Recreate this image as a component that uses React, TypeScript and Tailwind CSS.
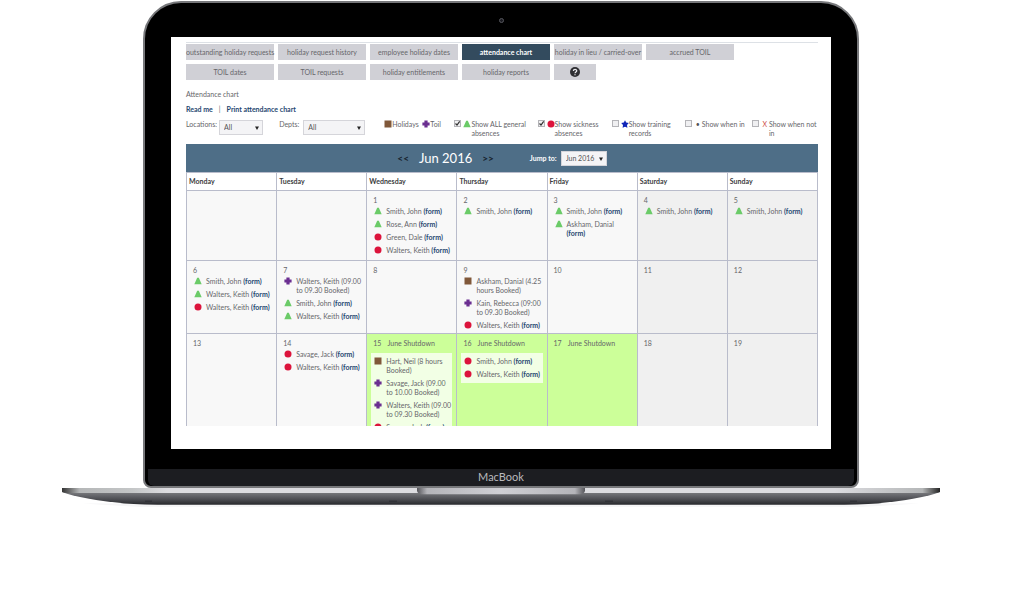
import { useState } from 'react';
import clsx from 'clsx';

type Kind = 'absence' | 'sick' | 'holiday' | 'toil' | 'training';

type Entry = {
  kind: Kind;
  name: string;
  booked?: string;
};

type Day = {
  date?: number;
  note?: string;
  weekend?: boolean;
  entries?: Entry[];
};

const tabs = [
  'outstanding holiday requests',
  'holiday request history',
  'employee holiday dates',
  'attendance chart',
  'holiday in lieu / carried-over',
  'accrued TOIL',
  'TOIL dates',
  'TOIL requests',
  'holiday entitlements',
  'holiday reports',
];

const weekdays = ['Monday', 'Tuesday', 'Wednesday', 'Thursday', 'Friday', 'Saturday', 'Sunday'];

const weeks: { height: string; days: Day[] }[] = [
  {
    height: 'h-[70px]',
    days: [
      {},
      {},
      {
        date: 1,
        entries: [
          { kind: 'absence', name: 'Smith, John' },
          { kind: 'absence', name: 'Rose, Ann' },
          { kind: 'sick', name: 'Green, Dale' },
          { kind: 'sick', name: 'Walters, Keith' },
        ],
      },
      { date: 2, entries: [{ kind: 'absence', name: 'Smith, John' }] },
      {
        date: 3,
        entries: [
          { kind: 'absence', name: 'Smith, John' },
          { kind: 'absence', name: 'Askham, Danial' },
        ],
      },
      { date: 4, weekend: true, entries: [{ kind: 'absence', name: 'Smith, John' }] },
      { date: 5, weekend: true, entries: [{ kind: 'absence', name: 'Smith, John' }] },
    ],
  },
  {
    height: 'h-[73px]',
    days: [
      {
        date: 6,
        entries: [
          { kind: 'absence', name: 'Smith, John' },
          { kind: 'absence', name: 'Walters, Keith' },
          { kind: 'sick', name: 'Walters, Keith' },
        ],
      },
      {
        date: 7,
        entries: [
          { kind: 'toil', name: 'Walters, Keith', booked: '(09.00 to 09.30 Booked)' },
          { kind: 'absence', name: 'Smith, John' },
          { kind: 'absence', name: 'Walters, Keith' },
        ],
      },
      { date: 8 },
      {
        date: 9,
        entries: [
          { kind: 'holiday', name: 'Askham, Danial', booked: '(4.25 hours Booked)' },
          { kind: 'toil', name: 'Kain, Rebecca', booked: '(09:00 to 09.30 Booked)' },
          { kind: 'sick', name: 'Walters, Keith' },
        ],
      },
      { date: 10 },
      { date: 11, weekend: true },
      { date: 12, weekend: true },
    ],
  },
  {
    height: 'h-[110px]',
    days: [
      { date: 13 },
      {
        date: 14,
        entries: [
          { kind: 'sick', name: 'Savage, Jack' },
          { kind: 'sick', name: 'Walters, Keith' },
        ],
      },
      {
        date: 15,
        note: 'June Shutdown',
        entries: [
          { kind: 'holiday', name: 'Hart, Neil', booked: '(8 hours Booked)' },
          { kind: 'toil', name: 'Savage, Jack', booked: '(09.00 to 10.00 Booked)' },
          { kind: 'toil', name: 'Walters, Keith', booked: '(09.00 to 09.30 Booked)' },
          { kind: 'sick', name: 'Savage, Jack' },
        ],
      },
      {
        date: 16,
        note: 'June Shutdown',
        entries: [
          { kind: 'sick', name: 'Smith, John' },
          { kind: 'sick', name: 'Walters, Keith' },
        ],
      },
      { date: 17, note: 'June Shutdown' },
      { date: 18, weekend: true },
      { date: 19, weekend: true },
    ],
  },
];

const legend: { kind?: Kind; mark?: string; label: string; checkbox?: boolean; checked?: boolean }[] = [
  { kind: 'holiday', label: 'Holidays' },
  { kind: 'toil', label: 'Toil' },
  { kind: 'absence', label: 'Show ALL general absences', checkbox: true, checked: true },
  { kind: 'sick', label: 'Show sickness absences', checkbox: true, checked: true },
  { kind: 'training', label: 'Show training records', checkbox: true },
  { mark: '•', label: 'Show when in', checkbox: true },
  { mark: 'X', label: 'Show when not in', checkbox: true },
];

function Marker({ kind }: { kind: Kind }) {
  return (
    <svg viewBox="0 0 8 8" className="h-2 w-2 shrink-0" aria-hidden="true">
      {kind === 'absence' && <path d="M3.200.8h1.600L7.700 7.200H.3Z" fill="#6bcb68" />}
      {kind === 'sick' && <circle cx="4" cy="4" r="3.5" fill="#dc143c" />}
      {kind === 'holiday' && <rect x=".5" y=".5" width="7" height="7" fill="#80583a" />}
      {kind === 'toil' && <path d="M2.400.4h3.200v2h2v3.200h-2v2H2.400v-2h-2V2.400h2Z" fill="#6b2f91" />}
      {kind === 'training' && (
        <path d="m4 .3 1.200 2.200 2.600.5L6 5l.4 2.700L4 6.800 1.600 7.700 2 5 .2 3l2.600-.5Z" fill="#1226b8" />
      )}
    </svg>
  );
}

function Select({ id, options, className }: { id: string; options: string[]; className: string }) {
  return (
    <div className={clsx('relative', className)}>
      <select
        id={id}
        className="block h-[15px] w-full appearance-none border border-[#d5d5da] bg-[#f4f4f6] px-1 text-[#555]"
      >
        {options.map((option) => (
          <option key={option}>{option}</option>
        ))}
      </select>
      <svg viewBox="0 0 4 4" className="pointer-events-none absolute top-1.5 right-1 h-1 w-1" aria-hidden="true">
        <path d="M0 .5h4L2 4Z" fill="#222" />
      </svg>
    </div>
  );
}

function Legend() {
  return (
    <ul className="grid grid-cols-[38fr_32fr_83fr_74fr_73fr_67fr_66fr]">
      {legend.map(({ kind, mark, label, checkbox, checked }) => (
        <li key={label}>
          <label className="flex items-start">
            {checkbox && (
              <span className="relative mr-0.5 h-[7px] w-[7px] shrink-0">
                <input
                  type="checkbox"
                  defaultChecked={checked}
                  className="peer block h-[7px] w-[7px] appearance-none border border-[#b4b4b8] bg-[#f0f0f2]"
                />
                <svg
                  viewBox="0 0 7 7"
                  className="pointer-events-none absolute inset-0 hidden h-[7px] w-[7px] peer-checked:block"
                  aria-hidden="true"
                >
                  <path d="M1.5 3.5 3 5l2.700-3.600" fill="none" stroke="#333" strokeWidth="1.2" />
                </svg>
              </span>
            )}
            {kind && <Marker kind={kind} />}
            {mark && (
              <span className={clsx('w-2 shrink-0 text-center', mark === 'X' ? 'text-[#d0524a]' : 'text-[#555]')}>
                {mark}
              </span>
            )}
            <span>{label}</span>
          </label>
        </li>
      ))}
    </ul>
  );
}

function DayCell({ day }: { day: Day }) {
  return (
    <td
      className={clsx(
        'border border-[#b9bccb] p-0 pt-[5px] align-top',
        day.note ? 'bg-[#ccff99]' : day.weekend ? 'bg-[#f0f0f0]' : 'bg-[#f8f8f8]',
      )}
    >
      {day.date && (
        <p className="px-1.5">
          {day.date}
          {day.note && <span className="ml-1.5">{day.note}</span>}
        </p>
      )}
      {day.entries && (
        <ul
          className={clsx(
            'mr-1 flex flex-col gap-1',
            day.note ? 'mt-[5px] ml-1 bg-[#f2ffe5] py-1 pl-[3px]' : 'pt-0.5 pl-[7px]',
          )}
        >
          {day.entries.map((entry, i) => (
            <li key={i} className="flex">
              <Marker kind={entry.kind} />
              <span className="ml-1">
                {entry.booked ? (
                  `${entry.name} ${entry.booked}`
                ) : (
                  <>
                    {entry.name}{' '}
                    <a href="#form" className="font-bold text-[#1f4770]">
                      (form)
                    </a>
                  </>
                )}
              </span>
            </li>
          ))}
        </ul>
      )}
    </td>
  );
}

function AttendancePage() {
  const [active, setActive] = useState('attendance chart');

  return (
    <div className="h-[389px] overflow-hidden pt-[5px] pr-[13px] pl-[15px] font-['Lato',sans-serif] text-[7px] leading-[9px] text-[#66666a]">
      <nav className="flex flex-wrap gap-1 border-t border-[#dde1e6] pt-px">
        {tabs.map((tab) => (
          <button
            key={tab}
            type="button"
            onClick={() => setActive(tab)}
            className={clsx(
              'h-4 w-[88px] whitespace-nowrap',
              tab === active ? 'bg-[#334b5e] font-bold text-white' : 'bg-[#d0d0d6]',
            )}
          >
            {tab}
          </button>
        ))}
        <button type="button" aria-label="help" className="flex h-4 w-[42px] items-center justify-center bg-[#d0d0d6]">
          <svg viewBox="0 0 10 10" className="h-2.5 w-2.5" aria-hidden="true">
            <circle cx="5" cy="5" r="5" fill="#2f2f33" />
            <path
              d="M3.400 3.900c0-2 3.300-2 3.300-.1C6.700 5 5 5 5 6.300M5 7.200v1.100"
              fill="none"
              stroke="#e8e8ec"
              strokeWidth="1.3"
            />
          </svg>
        </button>
      </nav>

      <h1 className="mt-2.5">Attendance chart</h1>
      <p className="mt-1.5 flex gap-1.5">
        <a href="#read-me" className="font-bold text-[#1f4770]">
          Read me
        </a>
        <span>|</span>
        <a href="#print" className="font-bold text-[#1f4770]">
          Print attendance chart
        </a>
      </p>

      <div className="mt-1.5 grid grid-cols-[93fr_105fr_433fr]">
        <div className="flex gap-0.5">
          <label htmlFor="locations">Locations:</label>
          <Select id="locations" options={['All']} className="w-11" />
        </div>
        <div className="flex gap-1">
          <label htmlFor="depts">Depts:</label>
          <Select id="depts" options={['All']} className="w-[62px]" />
        </div>
        <Legend />
      </div>

      <div className="mt-1.5 flex h-7 items-center justify-center bg-[#4e6e87] text-white">
        <button type="button" aria-label="previous month" className="text-[10px] font-bold text-[#16222c]">
          &lt;&lt;
        </button>
        <h2 className="mx-2.5 text-[13px]">Jun 2016</h2>
        <button type="button" aria-label="next month" className="text-[10px] font-bold text-[#16222c]">
          &gt;&gt;
        </button>
        <label htmlFor="jump" className="mr-1 ml-9 font-bold">
          Jump to:
        </label>
        <Select id="jump" options={['Jun 2016']} className="w-[46px]" />
      </div>

      <table className="w-full table-fixed border-collapse">
        <thead>
          <tr className="h-[18px]">
            {weekdays.map((weekday) => (
              <th key={weekday} className="border border-[#b9bccb] px-0.5 text-left font-bold text-[#3c3c40]">
                {weekday}
              </th>
            ))}
          </tr>
        </thead>
        <tbody>
          {weeks.map((week, i) => (
            <tr key={i} className={week.height}>
              {week.days.map((day, j) => (
                <DayCell key={j} day={day} />
              ))}
            </tr>
          ))}
        </tbody>
      </table>
    </div>
  );
}

function LaptopBase() {
  return (
    <svg viewBox="0 0 878 22" preserveAspectRatio="none" className="block h-5 w-full" aria-hidden="true">
      <defs>
        <linearGradient id="edge">
          <stop offset="0" stopColor="#333" />
          <stop offset=".02" stopColor="#b5b7b8" />
          <stop offset=".08" stopColor="#c4c6c7" />
          <stop offset=".12" stopColor="#dcdce0" />
          <stop offset=".88" stopColor="#dcdce0" />
          <stop offset=".98" stopColor="#b5b7b8" />
          <stop offset="1" stopColor="#222" />
        </linearGradient>
        <linearGradient id="body" x2="0" y2="1">
          <stop offset="0" stopColor="#7b7c80" />
          <stop offset=".6" stopColor="#4a4b50" />
          <stop offset="1" stopColor="#26272b" />
        </linearGradient>
        <linearGradient id="notch">
          <stop offset="0" stopColor="#55555a" />
          <stop offset=".06" stopColor="#b4b4b9" />
          <stop offset=".5" stopColor="#cfcfd4" />
          <stop offset=".94" stopColor="#b4b4b9" />
          <stop offset="1" stopColor="#55555a" />
        </linearGradient>
      </defs>
      <path d="M20 17h838L800 21H78Z" fill="#f6f6f7" />
      <path d="M0 4.500C12 10 36 14 62 17Q80 18.500 110 18.500H768Q798 18.500 816 17C842 14 866 10 878 4.500Z" fill="url(#body)" />
      <path d="M0 0H878V4.500Q876 5.500 872 5.500H6Q2 5.500 0 4.500Z" fill="url(#edge)" />
      <path d="M355 0H523V3Q523 7 515 7H363Q355 7 355 3Z" fill="url(#notch)" />
      <path d="M83 14.500h7M327 14.500h8M543 14.500h8M788 14.500h7" stroke="#2b2c30" />
    </svg>
  );
}

export default function App() {
  return (
    <div className="min-h-screen bg-white pt-px pr-[70px] pl-[62px]">
      <div className="mx-[81px] overflow-hidden rounded-t-[38px] rounded-b-lg border-2 border-[#77787b] bg-black">
        <div className="flex h-[34px] items-center justify-center">
          <span className="h-[5px] w-[5px] rounded-full border border-[#55565c] bg-[#1a1a20]" />
        </div>
        <div className="mx-[26px] bg-white pb-[23px]">
          <AttendancePage />
        </div>
        <div className="mx-[3px] mt-5 flex h-[17px] items-center justify-center rounded-b-md bg-[#1c1d21] font-['Lato',sans-serif] text-[11px] text-[#b9b9bd]">
          MacBook
        </div>
      </div>
      <LaptopBase />
    </div>
  );
}
